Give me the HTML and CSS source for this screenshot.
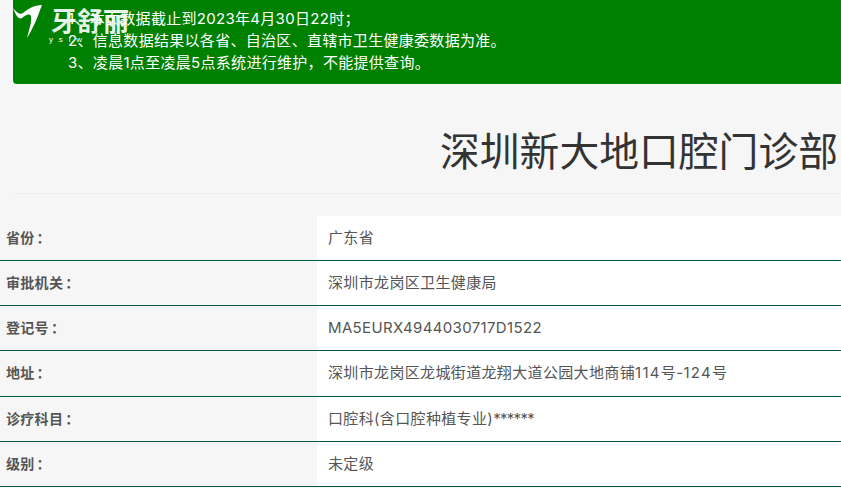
FILE: index.html
```
<!DOCTYPE html>
<html lang="zh-CN">
<head>
<meta charset="utf-8">
<title>深圳新大地口腔门诊部</title>
<link rel="stylesheet" href="styles.css">
</head>
<body>
<div class="logo">
  <svg class="swoosh" width="44" height="40" viewBox="0 0 44 40"><path d="M13 8 C17 13 20 15 23 13 C28 9 34 5 42 5 C39 12 37 20 33 27 C31 31 29 35 27 38 C29 30 32 22 31 16 C29 13 26 15 22 18 C19 20 16 16 13 8Z" fill="#fff"/></svg>
  <span class="logo-name">牙舒丽</span>
  <span class="logo-sub">y s l w</span>
</div>
<section class="notice">
  <p>1、本页数据截止到2023年4月30日22时；</p>
  <p>2、信息数据结果以各省、自治区、直辖市卫生健康委数据为准。</p>
  <p>3、凌晨1点至凌晨5点系统进行维护，不能提供查询。</p>
</section>
<h1 class="title">深圳新大地口腔门诊部</h1>
<div class="table">
  <div class="row"><div class="label">省份<span class="colon">：</span></div><div class="value">广东省</div></div>
  <div class="row"><div class="label">审批机关<span class="colon">：</span></div><div class="value">深圳市龙岗区卫生健康局</div></div>
  <div class="row"><div class="label">登记号<span class="colon">：</span></div><div class="value">MA5EURX4944030717D1522</div></div>
  <div class="row"><div class="label">地址<span class="colon">：</span></div><div class="value">深圳市龙岗区龙城街道龙翔大道公园大地商铺<span class="num">114</span>号-<span class="num">124</span>号</div></div>
  <div class="row"><div class="label">诊疗科目<span class="colon">：</span></div><div class="value">口腔科(含口腔种植专业)<span class="stars">******</span></div></div>
  <div class="row"><div class="label">级别<span class="colon">：</span></div><div class="value">未定级</div></div>
</div>
</body>
</html>
```

FILE: styles.css
```
* { box-sizing: border-box; }
html, body { margin: 0; padding: 0; }
body {
  position: relative;
  height: 488px;
  overflow: hidden;
  background: #f6f6f6;
  font-family: Inter, "Noto Sans CJK SC", sans-serif;
  color: #555;
}
.logo {
  position: absolute;
  left: 0;
  top: 0;
  width: 130px;
  height: 50px;
  color: #fff;
}
.swoosh { position: absolute; left: 0; top: 0; }
.logo-name {
  position: absolute;
  left: 51px;
  top: 5px;
  font-family: "Noto Sans CJK SC", serif;
  font-weight: 700;
  font-size: 26px;
  line-height: 30px;
  white-space: nowrap;
  opacity: 0.9;
}
.logo-sub {
  position: absolute;
  left: 49px;
  top: 35px;
  font-size: 8px;
  line-height: 10px;
  letter-spacing: 1.8px;
  white-space: pre;
  font-family: "Liberation Sans", sans-serif;
}
.notice {
  margin-left: 13px;
  height: 84px;
  padding: 8px 0 0 55px;
  background: #008000;
  border-bottom-left-radius: 4px;
  color: #fff;
  font-size: 15px;
  line-height: 22px;
  letter-spacing: 0.3px;
}
.notice p { margin: 0; }
.title {
  margin: 0 0 0 13px;
  height: 110px;
  padding: 42px 3px 0 0;
  border-bottom: 1px solid #eee;
  text-align: right;
  font-size: 39.8px;
  line-height: 52px;
  font-weight: 400;
  color: #333;
  white-space: nowrap;
}
.table { margin-top: 22px; }
.row {
  display: flex;
  height: 45.15px;
  border-bottom: 1px solid #0b5a35;
}
.label {
  width: 317px;
  padding-left: 6px;
  font-size: 14px;
  font-weight: 700;
  line-height: 43px;
  letter-spacing: 0.3px;
}
.colon { margin-left: 2px; font-family: "Noto Sans CJK TC", sans-serif; }
.value {
  flex: 1;
  padding-left: 11px;
  background: #fff;
  font-size: 15px;
  line-height: 43px;
  letter-spacing: 0.35px;
}
.stars { letter-spacing: -0.7px; }
.num { letter-spacing: 1.3px; }
```
